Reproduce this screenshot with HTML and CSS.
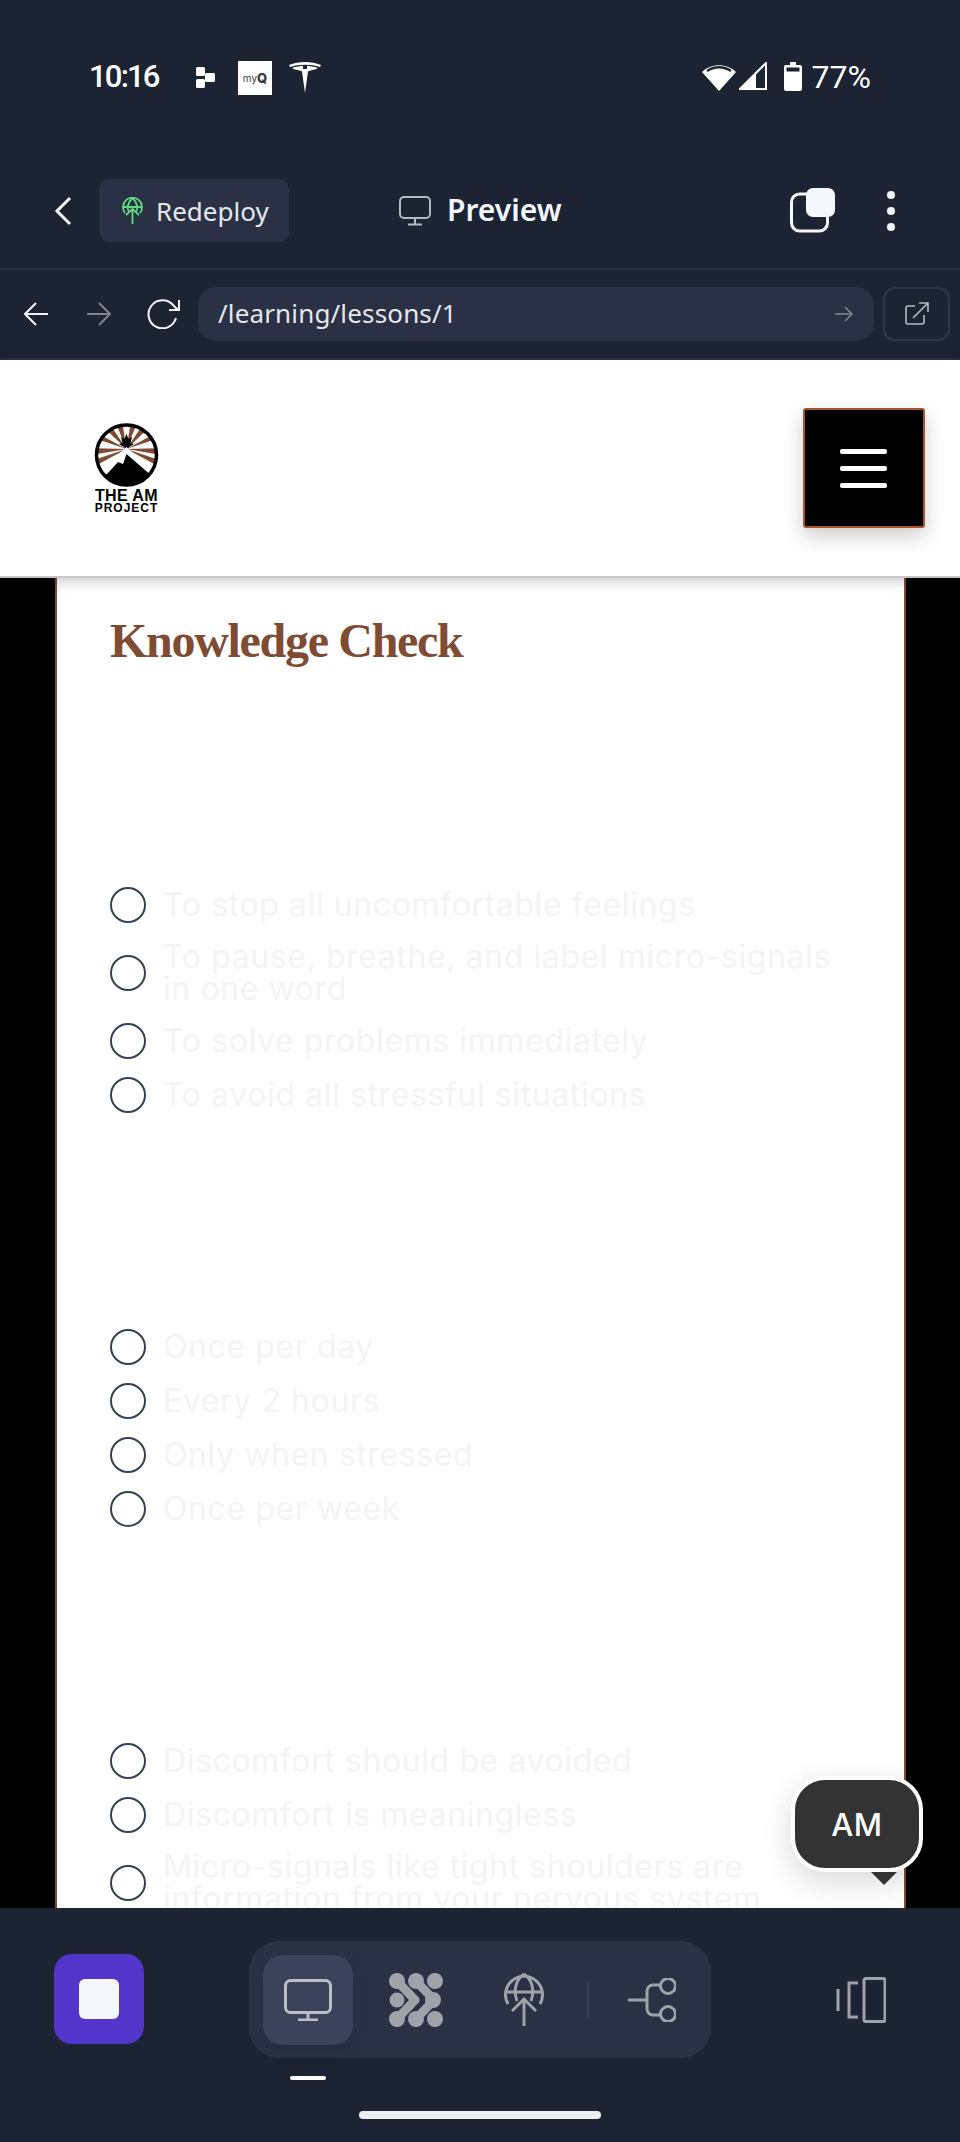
FILE: index.html
```html
<!DOCTYPE html>
<html>
<head>
	<title>Knowledge Check Preview</title>
	<link rel="stylesheet" href="styles.css">
</head>
<body>
	<div class="status-bar">
		<span class="clock">10:16</span>
		<svg class="note-dots" width="19" height="21" viewBox="0 0 19 21"><rect x="0" y="0" width="9" height="9" rx="1.5" fill="#fff"/><rect x="0" y="12" width="9" height="9" rx="1.5" fill="#fff"/><rect x="9" y="6" width="10" height="9" rx="1.5" fill="#fff"/></svg>
		<span class="myq"><span class="myq-text">my</span><span class="myq-q">Q</span></span>
		<svg class="tesla" width="32" height="31" viewBox="0 0 32 31" fill="#fff"><path d="M0 3 C10 -1 22 -1 32 3 L31 5 C22 2 10 2 1 5 Z"/><path d="M3 6 C7 4.500 12 4 14 4 V7 L18 7 V4 C20 4 25 4.500 29 6 C26 8 22 8 19 9.500 L16 31 L13 9.500 C10 8 6 8 3 6 Z"/></svg>
		<div class="status-right">
			<svg width="34" height="29" viewBox="0 0 34 29"><path d="M17 29 L0 10 C9 1 25 1 34 10 Z" fill="#fff"/><path d="M5 9 C12 4 22 4 29 9" fill="none" stroke="#1c2333" stroke-width="2.500"/></svg>
			<svg width="28" height="28" viewBox="0 0 28 28"><path d="M27 1 V27 H1 Z" fill="none" stroke="#fff" stroke-width="2"/><path d="M17 11 V27 H1 Z" fill="#fff"/></svg>
			<svg class="battery" width="18" height="29" viewBox="0 0 18 29"><path d="M6 0 H12 V3 H16 A2 2 0 0 1 18 5 V27 A2 2 0 0 1 16 29 H2 A2 2 0 0 1 0 27 V5 A2 2 0 0 1 2 3 H6 Z" fill="#fff"/><rect x="2.500" y="5.500" width="13" height="4" fill="#1c2333"/></svg>
			<span class="percent">77%</span>
		</div>
	</div>

	<div class="top-bar">
		<svg class="back" width="18" height="30" viewBox="0 0 18 30"><path d="M16 2 L3 15 L16 28" fill="none" stroke="#f4f6f9" stroke-width="3"/></svg>
		<div class="redeploy">
			<svg width="21" height="27" viewBox="0 0 21 27" fill="none" stroke="#5fd97f" stroke-width="1.800"><path d="M3 16 A9.500 9.500 0 1 1 18 16"/><path d="M1 10 H20 M10.500 1 C5 6 5 12 7 15 M10.500 1 C16 6 16 12 14 15"/><path d="M10.500 27 V12 M4 18 L10.500 12 L17 18"/></svg>
			<span>Redeploy</span>
		</div>
		<div class="preview">
			<svg width="32" height="30" viewBox="0 0 32 30" fill="none" stroke="#b4b9c0" stroke-width="2"><rect x="1" y="1" width="30" height="21" rx="4"/><path d="M16 22 V28 M9 28.500 H23"/></svg>
			<span>Preview</span>
		</div>
		<div class="top-right">
			<svg width="45" height="45" viewBox="0 0 45 45"><rect x="1.500" y="6" width="36" height="37" rx="8" fill="none" stroke="#f4f7fb" stroke-width="3"/><rect x="16" y="0" width="29" height="29" rx="7" fill="#f4f7fb"/></svg>
			<div class="dots"><i></i><i></i><i></i></div>
		</div>
	</div>

	<div class="url-bar">
		<svg class="nav-back" width="24" height="24" viewBox="0 0 24 24" fill="none" stroke="#f4f6f9" stroke-width="2"><path d="M24 12 H1 M12 1 L1 12 L12 23"/></svg>
		<svg class="nav-forward" width="24" height="24" viewBox="0 0 24 24" fill="none" stroke="#80858f" stroke-width="2"><path d="M0 12 H23 M12 1 L23 12 L12 23"/></svg>
		<svg class="nav-reload" width="33" height="30" viewBox="0 0 33 30" fill="none" stroke="#f4f6f9" stroke-width="2"><path d="M29 19 A14 14 0 1 1 26 6 L31 11"/><path d="M32 1 V11 H22"/></svg>
		<div class="url-input">
			<span>/learning/lessons/1</span>
			<svg width="18" height="18" viewBox="0 0 18 18" fill="none" stroke="#80858f" stroke-width="1.500"><path d="M0 9 H17 M10 2 L17 9 L10 16"/></svg>
		</div>
		<div class="open-btn">
			<svg width="24" height="24" viewBox="0 0 24 24" fill="none" stroke="#b4b9c0" stroke-width="1.600"><path d="M10 4 H3 A2 2 0 0 0 1 6 V20 A2 2 0 0 0 3 22 H17 A2 2 0 0 0 19 20 V13"/><path d="M8 16 L23 1 M14 1 H23 V10"/></svg>
		</div>
	</div>

	<header class="site-header">
		<div class="logo">
			<svg width="67" height="64" viewBox="0 0 67 64">
				<defs><clipPath id="sun"><circle cx="33.500" cy="32" r="30"/></clipPath></defs>
				<circle cx="33.500" cy="32" r="30" fill="#fff"/>
				<g clip-path="url(#sun)" fill="#7f4c33">
					<path d="M33.500 26 L22 -2 L29 -3 Z M33.500 26 L38 -3 L45 -2 Z"/>
					<path d="M33.500 26 L6 0 L14 -3 Z M33.500 26 L53 -3 L61 0 Z"/>
					<path d="M33.500 26 L-2 14 L0 8 Z M33.500 26 L67 8 L69 14 Z"/>
					<path d="M33.500 26 L-2 25 L-2 32 Z M33.500 26 L69 25 L69 32 Z"/>
					<path d="M33.500 26 L-2 38 L0 44 Z M33.500 26 L67 44 L69 38 Z"/>
				</g>
				<path d="M28 14 L31.500 16 L33.500 11 L35.500 16 L39 14 L37.500 20 L41 21 L36 24 L33.500 29 L31 24 L26 21 L29.500 20 Z" fill="#000"/>
				<g clip-path="url(#sun)">
					<path d="M33.500 24 L62 50 L62 66 L5 66 L5 50 Z" fill="#fff"/>
					<path d="M33.500 31 L60 54 L60 66 L6 66 L6 57 L15 50 L25 39 L30 41 Z" fill="#000"/>
				</g>
				<circle cx="33.500" cy="32" r="30" fill="none" stroke="#000" stroke-width="3.500"/>
			</svg>
			<div class="logo-name">THE AM</div>
			<div class="logo-sub">PROJECT</div>
		</div>
		<button class="menu-btn"><i></i><i></i><i></i></button>
	</header>

	<main class="content">
		<div class="card">
			<h2>Knowledge Check</h2>
			<div class="quiz-group">
				<label class="option"><input type="radio" name="q1"><span>To stop all uncomfortable feelings</span></label>
				<label class="option"><input type="radio" name="q1"><span>To pause, breathe, and label micro-signals in one word</span></label>
				<label class="option"><input type="radio" name="q1"><span>To solve problems immediately</span></label>
				<label class="option"><input type="radio" name="q1"><span>To avoid all stressful situations</span></label>
			</div>
			<div class="quiz-group">
				<label class="option"><input type="radio" name="q2"><span>Once per day</span></label>
				<label class="option"><input type="radio" name="q2"><span>Every 2 hours</span></label>
				<label class="option"><input type="radio" name="q2"><span>Only when stressed</span></label>
				<label class="option"><input type="radio" name="q2"><span>Once per week</span></label>
			</div>
			<div class="quiz-group">
				<label class="option"><input type="radio" name="q3"><span>Discomfort should be avoided</span></label>
				<label class="option"><input type="radio" name="q3"><span>Discomfort is meaningless</span></label>
				<label class="option"><input type="radio" name="q3"><span>Micro-signals like tight shoulders are information from your nervous system</span></label>
			</div>
		</div>
	</main>

	<footer class="bottom-bar">
		<div class="bottom-row">
			<div class="stop-btn"><i></i></div>
			<div class="tabs">
				<div class="tab active">
					<svg width="48" height="42" viewBox="0 0 48 42" fill="none" stroke="#b9bec5" stroke-width="3"><rect x="1.500" y="1.500" width="45" height="32" rx="5"/><path d="M24 34 V41 M14 41 H34"/></svg>
				</div>
				<div class="tab">
					<svg width="54" height="54" viewBox="0 0 54 54"><g fill="#9ea3a9"><circle cx="27" cy="8" r="8"/><circle cx="46" cy="8" r="8"/><circle cx="8" cy="27" r="7.500"/><circle cx="27" cy="46" r="8"/><circle cx="46" cy="46" r="8"/><circle cx="8" cy="8" r="8"/><circle cx="8" cy="46" r="8"/><circle cx="44" cy="27" r="8"/></g><g fill="none" stroke="#9ea3a9" stroke-width="9" stroke-linejoin="round"><path d="M8 8 L26 27 L8 46"/><path d="M27 8 L45 27 L27 46"/></g></svg>
				</div>
				<div class="tab">
					<svg width="40" height="54" viewBox="0 0 40 54" fill="none" stroke="#9ea3a9" stroke-width="3"><path d="M4 31 A18.500 18.500 0 1 1 36 31"/><path d="M1 19 H39 M20 1 C10 8 10 20 13 28 M20 1 C30 8 30 20 27 28"/><path d="M20 53 V26 M8 38 L20 26 L32 38"/></svg>
				</div>
				<i class="tab-sep"></i>
				<div class="tab tab-last">
					<svg width="48" height="44" viewBox="0 0 48 44" fill="none" stroke="#9ea3a9" stroke-width="3"><path d="M0 22 H19"/><path d="M32 7 H25 A6 6 0 0 0 19 13 V31 A6 6 0 0 0 25 37 H32"/><circle cx="40" cy="8" r="7.500"/><circle cx="40" cy="36" r="7.500"/></svg>
				</div>
			</div>
			<svg class="panels" width="50" height="46" viewBox="0 0 50 46" fill="none" stroke="#9ea3a9" stroke-width="3"><rect x="28" y="1.500" width="21" height="43" rx="2"/><path d="M22 6 H13 V40 H22"/><path d="M2 12 V34"/></svg>
		</div>
		<div class="tab-marker"></div>
		<div class="home-bar"></div>
	</footer>

	<div class="chat-bubble">AM</div>
	<div class="chat-tail"></div>
</body>
</html>
```

FILE: styles.css
```css
body {
	margin: 0;
	width: 960px;
	height: 2142px;
	overflow: hidden;
	position: relative;
	background-color: #1c2333;
	font-family: "Noto Sans", sans-serif;
	display: flex;
	flex-direction: column;
}
i {
	display: block;
}

/* phone status bar */
.status-bar {
	height: 170px;
	box-sizing: border-box;
	padding: 60px 89px 0 89px;
	display: flex;
	align-items: flex-start;
	color: #ffffff;
}
.clock {
	width: 71px;
	font-family: Roboto, sans-serif;
	font-size: 31px;
	font-weight: 500;
	line-height: 34px;
	letter-spacing: -1.8px;
	white-space: nowrap;
}
.note-dots {
	margin: 7px 0 0 36px;
}
.myq {
	width: 34px;
	height: 34px;
	margin: 1px 0 0 23px;
	background-color: #ffffff;
	color: #33383f;
	display: flex;
	align-items: center;
	justify-content: center;
	font-family: Inter, sans-serif;
}
.myq-text {
	font-size: 10px;
}
.myq-q {
	font-size: 13px;
	font-weight: 800;
}
.tesla {
	margin: 2px 0 0 17px;
}
.status-right {
	margin-left: auto;
	display: flex;
	align-items: flex-start;
	padding-top: 2px;
}
.status-right svg + svg {
	margin-left: 3px;
}
.status-right .battery {
	margin-left: 17px;
}
.percent {
	font-family: Roboto, sans-serif;
	font-size: 32px;
	line-height: 30px;
	margin-left: 10px;
}

/* replit top bar */
.top-bar {
	box-sizing: border-box;
	height: 100px;
	padding: 9px 0 26px 54px;
	border-bottom: 2px solid #2b3145;
	display: flex;
	align-items: center;
}
.redeploy {
	margin-left: 27px;
	width: 190px;
	height: 63px;
	box-sizing: border-box;
	padding-left: 23px;
	background-color: #2b3145;
	border-radius: 10px;
	display: flex;
	align-items: center;
	gap: 13px;
	color: #e4e7ec;
	font-size: 26px;
}
.preview {
	margin-left: 110px;
	display: flex;
	align-items: center;
	gap: 16px;
	color: #f4f7fb;
	font-size: 30px;
	font-weight: 600;
	line-height: 38px;
}
.preview span {
	margin-top: -2px;
}
.top-right {
	margin-left: auto;
	padding-right: 65px;
	display: flex;
	align-items: center;
	gap: 52px;
}
.dots i {
	width: 8px;
	height: 8px;
	margin: 8px 0;
	background-color: #f4f7fb;
	border-radius: 50%;
}

/* address bar */
.url-bar {
	box-sizing: border-box;
	height: 90px;
	padding: 17px 10px 17px 24px;
	border-bottom: 2px solid #2b3145;
	display: flex;
	align-items: center;
}
.nav-forward {
	margin-left: 39px;
}
.nav-reload {
	margin-left: 36px;
}
.url-input {
	margin-left: 18px;
	width: 676px;
	height: 54px;
	box-sizing: border-box;
	padding: 0 21px 0 20px;
	background-color: #2b3145;
	border-radius: 18px;
	display: flex;
	align-items: center;
	justify-content: space-between;
	color: #e4e7ec;
	font-size: 26px;
	letter-spacing: 0.15px;
}
.url-input span {
	margin-top: -2px;
}
.open-btn {
	margin-left: 9px;
	width: 67px;
	height: 54px;
	box-sizing: border-box;
	border: 2px solid #2f3649;
	border-radius: 12px;
	display: flex;
	align-items: center;
	justify-content: center;
}

/* site header */
.site-header {
	box-sizing: border-box;
	height: 218px;
	padding: 0 35px 0 93px;
	background-color: #ffffff;
	border-bottom: 2px solid #c6c6c6;
	box-shadow: 0 4px 12px rgba(0, 0, 0, 0.2);
	position: relative;
	z-index: 1;
	display: flex;
	align-items: center;
	justify-content: space-between;
}
.logo {
	width: 67px;
	text-align: center;
	color: #000000;
	font-family: "Liberation Sans", sans-serif;
	font-weight: bold;
}
.logo svg {
	display: block;
	margin-bottom: 1px;
}
.logo-name {
	font-size: 16px;
	line-height: 15px;
	letter-spacing: 0.4px;
	white-space: nowrap;
}
.logo-sub {
	font-size: 12px;
	line-height: 10px;
	letter-spacing: 1px;
}
.menu-btn {
	width: 122px;
	height: 120px;
	padding: 0 2px 0 0;
	background-color: #000000;
	border: 2px solid #a9552b;
	border-radius: 3px;
	box-shadow: 0 8px 20px rgba(0, 0, 0, 0.2);
	display: flex;
	flex-direction: column;
	align-items: center;
	justify-content: center;
	gap: 12px;
}
.menu-btn i {
	width: 47px;
	height: 5px;
	border-radius: 2px;
	background-color: #ffffff;
}

/* lesson content */
.content {
	height: 1330px;
	flex: none;
	overflow: hidden;
	background-color: #000000;
	padding: 0 54px 0 55px;
}
.card {
	height: 100%;
	box-sizing: border-box;
	padding: 41px 54px 0 53px;
	background-color: #ffffff;
	border-left: 2px solid #7f4c33;
	border-right: 2px solid #7f4c33;
}
h2 {
	margin: 0 0 224px 0;
	font-family: "Liberation Serif", serif;
	font-weight: bold;
	font-size: 48px;
	line-height: 44px;
	letter-spacing: -1.3px;
	color: #7f4c33;
}
.quiz-group {
	margin-bottom: 216px;
	display: flex;
	flex-direction: column;
	gap: 18px;
}
.option {
	display: flex;
	align-items: center;
	gap: 17px;
	min-height: 36px;
	font-family: Inter, sans-serif;
	font-size: 32px;
	line-height: 32px;
	letter-spacing: 0.6px;
	color: #f4f4f5;
}
.option input {
	appearance: none;
	flex: none;
	box-sizing: border-box;
	width: 36px;
	height: 36px;
	margin: 0;
	border: 2px solid #374151;
	border-radius: 50%;
	background-color: #ffffff;
}

/* bottom bar */
.bottom-bar {
	flex: 1;
	position: relative;
	z-index: 2;
	background-color: #1c2333;
}
.bottom-row {
	padding: 33px 74px 0 54px;
	display: flex;
	align-items: center;
}
.stop-btn {
	width: 90px;
	height: 90px;
	margin-top: -1px;
	background-color: #5236cc;
	border-radius: 18px;
	display: flex;
	align-items: center;
	justify-content: center;
}
.stop-btn i {
	width: 40px;
	height: 40px;
	background-color: #f4f7fb;
	border-radius: 6px;
}
.tabs {
	margin-left: 105px;
	width: 462px;
	height: 117px;
	box-sizing: border-box;
	padding-left: 14px;
	background-color: #2b3145;
	border-radius: 30px;
	display: flex;
	align-items: center;
}
.tab {
	width: 90px;
	height: 90px;
	margin-right: 18px;
	flex: none;
	display: flex;
	align-items: center;
	justify-content: center;
	border-radius: 20px;
}
.tab.active {
	background-color: #3b435b;
	box-shadow: 0 6px 16px rgba(0, 0, 0, 0.12);
}
.tab-sep {
	width: 2px;
	height: 36px;
	background-color: #3b435b;
}
.tab-last {
	margin: 0 0 0 18px;
}
.panels {
	margin-left: auto;
}
.tab-marker {
	width: 36px;
	height: 4px;
	margin: 18px 0 0 290px;
	background-color: #ffffff;
	border-radius: 2px;
}
.home-bar {
	width: 242px;
	height: 8px;
	margin: 31px auto 0 auto;
	background-color: #eceff1;
	border-radius: 4px;
}

/* floating chat button sits over the page */
.chat-bubble {
	position: absolute;
	left: 791px;
	top: 1776px;
	z-index: 3;
	width: 132px;
	height: 96px;
	box-sizing: border-box;
	background-color: #333333;
	border: 4px solid #ffffff;
	border-radius: 34px;
	box-shadow: 0 10px 30px rgba(0, 0, 0, 0.15);
	color: #ffffff;
	font-family: Inter, sans-serif;
	font-size: 31px;
	font-weight: 500;
	letter-spacing: 0.5px;
	display: flex;
	align-items: center;
	justify-content: center;
}
.chat-tail {
	position: absolute;
	left: 871px;
	top: 1872px;
	z-index: 3;
	width: 0;
	height: 0;
	border-left: 13px solid transparent;
	border-right: 13px solid transparent;
	border-top: 13px solid #333333;
}
```
